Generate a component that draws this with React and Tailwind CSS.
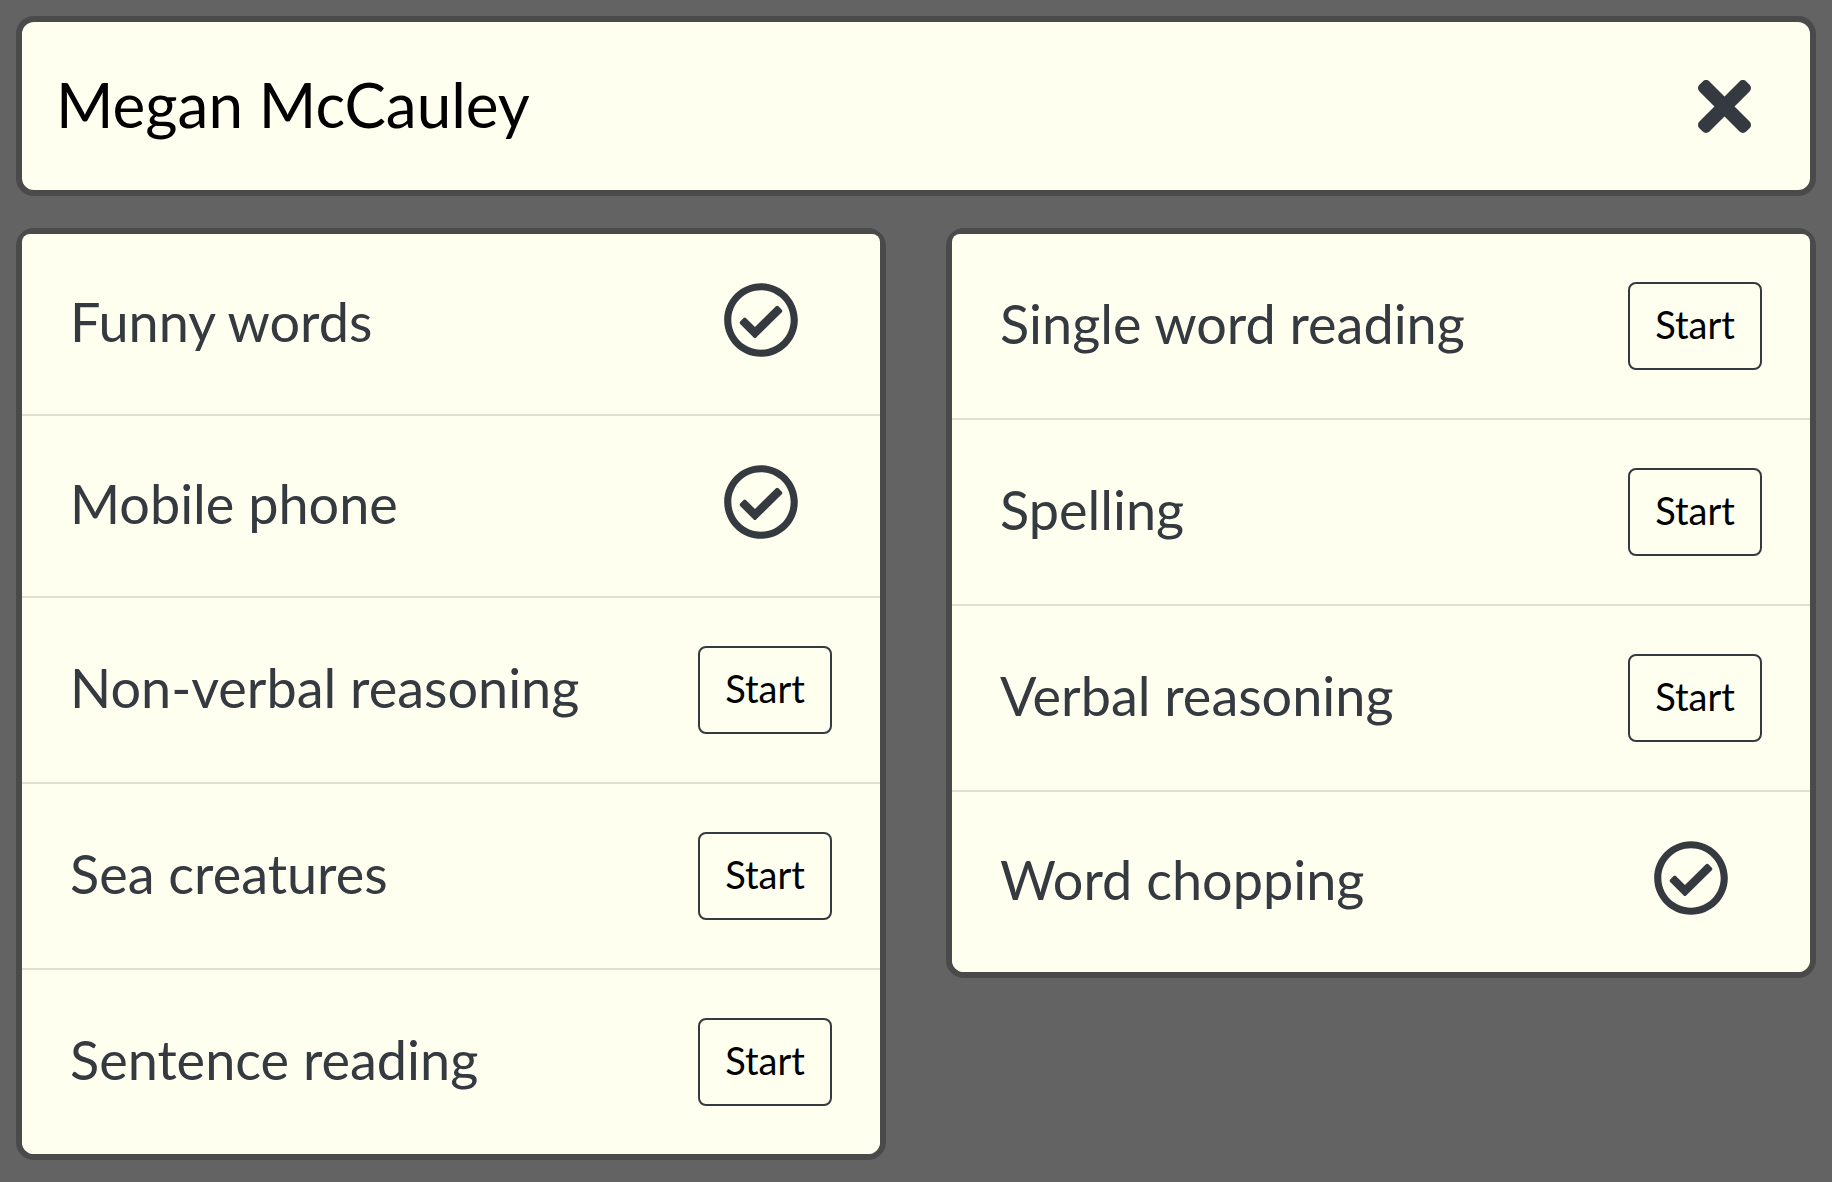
import { useState } from "react";
import { FaRegCheckCircle, FaTimes } from "react-icons/fa";

const columns = [
  [
    { name: "Funny words", done: true },
    { name: "Mobile phone", done: true },
    { name: "Non-verbal reasoning", done: false },
    { name: "Sea creatures", done: false },
    { name: "Sentence reading", done: false },
  ],
  [
    { name: "Single word reading", done: false },
    { name: "Spelling", done: false },
    { name: "Verbal reasoning", done: false },
    { name: "Word chopping", done: true },
  ],
];

function TestRow({ test, onStart }) {
  return (
    <li className="flex items-center justify-between gap-6 p-12 bg-[#fffff0] border-b-2 border-[#dfdfd2] first:rounded-t-lg last:rounded-b-xl last:border-b-0">
      <span className="text-[54px] leading-[68px] pb-1">{test.name}</span>
      {test.done ? (
        <FaRegCheckCircle
          className="size-[76px] shrink-0 mr-[33px] mb-2"
          role="img"
          aria-label="Completed"
        />
      ) : (
        <button
          type="button"
          onClick={() => onStart(test.name)}
          aria-label={`Start ${test.name}`}
          className="w-[134px] h-[88px] shrink-0 rounded-lg border-2 border-[#343a40] text-black text-[38px] leading-[48px] pb-1 cursor-pointer hover:bg-[#f4f4dc]"
        >
          Start
        </button>
      )}
    </li>
  );
}

export default function App() {
  const [started, setStarted] = useState("");

  return (
    <main
      data-started={started}
      className="min-h-screen bg-[#636363] p-4 text-[#343a40] font-['Lato','Open_Sans',sans-serif]"
    >
      <header className="flex items-center justify-between pl-[34px] pr-[59px] py-[42px] mb-8 rounded-[18px] border-6 border-[#4a4a4a] bg-[#fffff0]">
        <h1 className="text-[62px] leading-[80px] pb-1 text-black">
          Megan McCauley
        </h1>
        <button type="button" aria-label="Close" className="cursor-pointer">
          <FaTimes className="w-[53px] h-[77px]" />
        </button>
      </header>

      <div className="grid grid-cols-1 lg:grid-cols-2 items-start gap-x-[60px] gap-y-8">
        {columns.map((tests, i) => (
          <ul
            key={i}
            className="rounded-[18px] border-6 border-[#4a4a4a] bg-[#fffff0]"
          >
            {tests.map((test) => (
              <TestRow key={test.name} test={test} onStart={setStarted} />
            ))}
          </ul>
        ))}
      </div>
    </main>
  );
}
